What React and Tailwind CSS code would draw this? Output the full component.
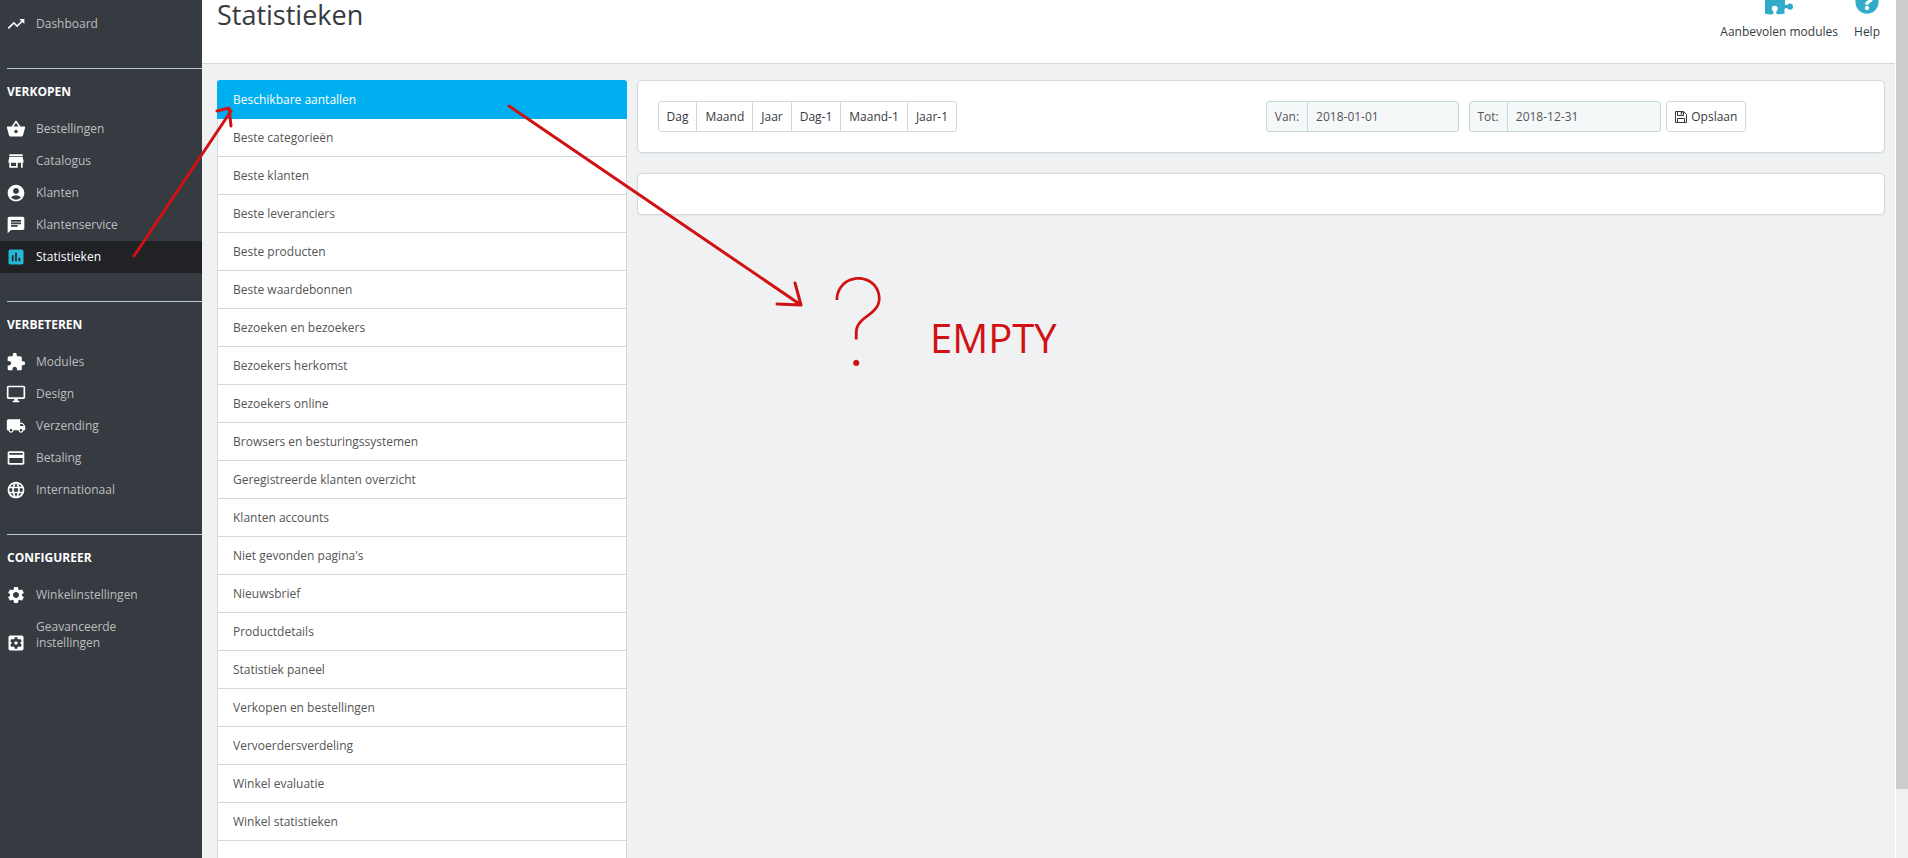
import React, { useState } from "react";
import {
  MdTrendingUp,
  MdShoppingBasket,
  MdStore,
  MdAccountCircle,
  MdChat,
  MdAssessment,
  MdExtension,
  MdOutlineDesktopWindows,
  MdLocalShipping,
  MdCreditCard,
  MdLanguage,
  MdSettings,
  MdSettingsApplications,
} from "react-icons/md";
import { FaPuzzlePiece, FaQuestionCircle } from "react-icons/fa";

const menu = [
  {
    title: "Verkopen",
    items: [
      { label: "Bestellingen", icon: MdShoppingBasket },
      { label: "Catalogus", icon: MdStore },
      { label: "Klanten", icon: MdAccountCircle },
      { label: "Klantenservice", icon: MdChat },
      { label: "Statistieken", icon: MdAssessment, active: true },
    ],
  },
  {
    title: "Verbeteren",
    items: [
      { label: "Modules", icon: MdExtension },
      { label: "Design", icon: MdOutlineDesktopWindows },
      { label: "Verzending", icon: MdLocalShipping },
      { label: "Betaling", icon: MdCreditCard },
      { label: "Internationaal", icon: MdLanguage },
    ],
  },
  {
    title: "Configureer",
    items: [
      { label: "Winkelinstellingen", icon: MdSettings },
      { label: "Geavanceerde instellingen", icon: MdSettingsApplications },
    ],
  },
];

const reports = [
  "Beschikbare aantallen",
  "Beste categorieën",
  "Beste klanten",
  "Beste leveranciers",
  "Beste producten",
  "Beste waardebonnen",
  "Bezoeken en bezoekers",
  "Bezoekers herkomst",
  "Bezoekers online",
  "Browsers en besturingssystemen",
  "Geregistreerde klanten overzicht",
  "Klanten accounts",
  "Niet gevonden pagina's",
  "Nieuwsbrief",
  "Productdetails",
  "Statistiek paneel",
  "Verkopen en bestellingen",
  "Vervoerdersverdeling",
  "Winkel evaluatie",
  "Winkel statistieken",
];

const periods = ["Dag", "Maand", "Jaar", "Dag-1", "Maand-1", "Jaar-1"];

function MenuItem({ label, icon: Icon, active }) {
  return (
    <a
      href="#"
      className={`flex items-end gap-[10px] py-2 pl-[6px] pr-10 leading-4 ${
        active ? "bg-[#202226] text-white" : "text-[#bebebe] hover:text-white"
      }`}
    >
      <Icon className={`-my-[2px] h-5 w-5 shrink-0 ${active ? "text-[#25b9d7]" : "text-white"}`} />
      <span>{label}</span>
    </a>
  );
}

function Sidebar() {
  return (
    <nav className="w-[202px] shrink-0 bg-[#363a41] pt-2">
      <MenuItem label="Dashboard" icon={MdTrendingUp} />
      {menu.map((group) => (
        <section key={group.title} className="pt-7">
          <h2 className="ml-[7px] border-t border-[#bbcdd2] pb-[13px] pt-[15px] font-bold uppercase leading-4 text-white">
            {group.title}
          </h2>
          {group.items.map((item) => (
            <MenuItem key={item.label} {...item} />
          ))}
        </section>
      ))}
    </nav>
  );
}

function FloppyIcon() {
  return (
    <svg viewBox="0 0 12 12" className="h-3 w-3" fill="none" stroke="currentColor" aria-hidden="true">
      <path d="M.5.5h8l3 3v8H.5z" />
      <path d="M2.5 11.5v-4h7v4M2.5.5v4h6v-4" />
      <path d="M6.5 1v2.500" strokeWidth="1.500" />
    </svg>
  );
}

function DateField({ id, label, value, onChange }) {
  return (
    <div className="w-1/3 px-[5px]">
      <div className="flex h-[31px] overflow-hidden rounded-[3px] border border-[#c7d6db] bg-[#f5f8f9] text-[#555]">
        <label htmlFor={id} className="flex items-center border-r border-[#c7d6db] px-2">
          {label}
        </label>
        <input
          id={id}
          type="text"
          value={value}
          onChange={(e) => onChange(e.target.value)}
          className="w-full min-w-0 bg-transparent px-2 outline-none"
        />
      </div>
    </div>
  );
}

function Annotations() {
  return (
    <div className="pointer-events-none absolute inset-0 text-[#d01214]">
      <svg className="absolute left-0 top-0 h-[400px] w-[1100px]" fill="none" stroke="currentColor" strokeWidth="3" strokeLinecap="round" strokeLinejoin="round">
        <path d="M134 256 L231 111 M217 111 L229 108 L231 126" />
        <path d="M509 106 L801 305 M795 283 L801 305 L777 304" />
      </svg>
      <span className="absolute left-[830px] top-[262px] font-[Inter] text-[120px] font-thin leading-none">?</span>
      <span className="absolute left-[930px] top-[318px] text-[40px] font-normal leading-none">EMPTY</span>
    </div>
  );
}

export default function App() {
  const [selected, setSelected] = useState(reports[0]);
  const [from, setFrom] = useState("2018-01-01");
  const [to, setTo] = useState("2018-12-31");

  return (
    <div className="relative flex h-screen overflow-hidden bg-[#eff1f2] font-['Open_Sans',sans-serif] text-[12px] text-[#363a41]">
      <Sidebar />

      <div className="min-w-0 flex-1">
        <header className="flex h-16 items-end justify-between overflow-hidden border-b border-[#d3d8db] bg-white px-[15px]">
          <h1 className="pb-[34px] text-[27px] leading-7">Statistieken</h1>
          <div className="flex gap-4 pb-[23px]">
            <a href="#" className="flex flex-col items-center gap-2">
              <FaPuzzlePiece className="h-7 w-7 text-[#30abca]" />
              <span className="leading-4">Aanbevolen modules</span>
            </a>
            <a href="#" className="flex flex-col items-center gap-2">
              <FaQuestionCircle className="h-7 w-6 text-[#30abca]" />
              <span className="leading-4">Help</span>
            </a>
          </div>
        </header>

        <main className="flex pl-[10px] pr-[5px] pt-4">
          <div className="w-1/4 px-[5px]">
            <div className="rounded-[3px] border border-[#d3d8db] bg-white">
              {reports.map((name) => (
                <a
                  key={name}
                  href="#"
                  onClick={() => setSelected(name)}
                  className={`block border-b py-[10px] leading-[17px] ${
                    selected === name
                      ? "-mx-px -mt-px rounded-t-[3px] border-[#00aff0] bg-[#00aff0] px-4 pt-[11px] text-white"
                      : "border-[#d3d8db] px-[15px] text-[#555]"
                  }`}
                >
                  {name}
                </a>
              ))}
              <div className="h-[37px]" />
            </div>
          </div>

          <div className="w-3/4 px-[5px]">
            <section className="mb-5 rounded-[5px] border border-[#d3d8db] bg-white p-5 shadow-xs">
              <div className="-mx-[5px] flex">
                <div className="w-1/2 px-[5px]">
                  <div className="inline-flex divide-x divide-[#d3d8db] rounded-[3px] border border-[#d3d8db]">
                    {periods.map((p) => (
                      <button key={p} type="button" className="h-[29px] px-2 hover:bg-gray-50">
                        {p}
                      </button>
                    ))}
                  </div>
                </div>
                <form className="flex w-1/2" onSubmit={(e) => e.preventDefault()}>
                  <DateField id="from" label="Van:" value={from} onChange={setFrom} />
                  <DateField id="to" label="Tot:" value={to} onChange={setTo} />
                  <button type="submit" className="flex h-[31px] items-center gap-1 rounded-[3px] border border-[#d3d8db] px-2">
                    <FloppyIcon />
                    Opslaan
                  </button>
                </form>
              </div>
            </section>
            <section className="rounded-[5px] border border-[#d3d8db] bg-white p-5 shadow-xs" />
          </div>
        </main>
      </div>

      {/* Scrollbar */}
      <div className="w-[13px] shrink-0 border-l border-white bg-[#f0f0f0]">
        <div className="h-[92%] bg-[#cdcdcd]" />
      </div>

      <Annotations />
    </div>
  );
}
